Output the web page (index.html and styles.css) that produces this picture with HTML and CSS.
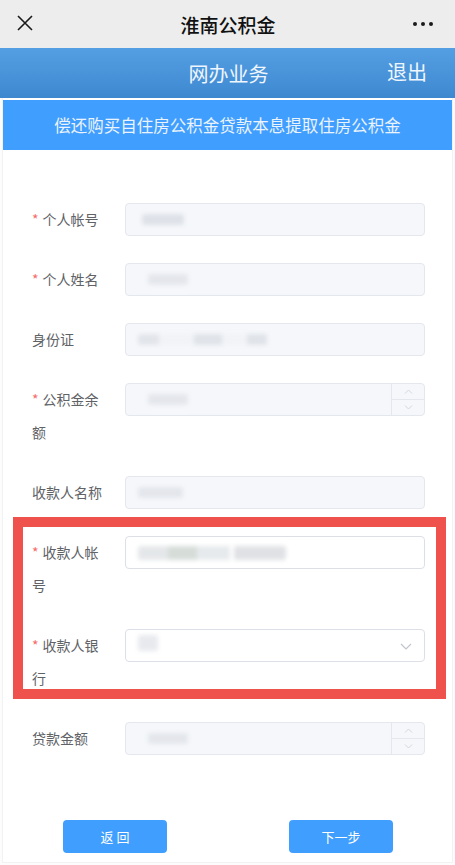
FILE: index.html
```html
<!DOCTYPE html>
<html lang="zh-CN">
<head>
    <meta charset="UTF-8">
    <meta name="viewport" content="width=device-width, initial-scale=1.0">
    <title>淮南公积金</title>
    <link rel="stylesheet" href="styles.css">
</head>
<body>
    <div class="topbar">
        <svg class="close" width="16" height="16" viewBox="0 0 16 16"><path d="M1 1L15 15M15 1L1 15" stroke="#1a1a1a" stroke-width="1.6" fill="none"/></svg>
        <span class="title">淮南公积金</span>
        <span class="dots"><i></i><i></i><i></i></span>
    </div>
    <div class="header">
        <span class="header-title">网办业务</span>
        <a class="logout" href="">退出</a>
    </div>
    <div class="page">
        <div class="subtitle">偿还购买自住房公积金贷款本息提取住房公积金</div>
        <form class="form">
            <div class="row">
                <label class="label"><em>*</em>个人帐号</label>
                <div class="input disabled"><span class="blob b1"></span></div>
            </div>
            <div class="row">
                <label class="label"><em>*</em>个人姓名</label>
                <div class="input disabled"><span class="blob b2"></span></div>
            </div>
            <div class="row">
                <label class="label">身份证</label>
                <div class="input disabled"><span class="blob b3"></span></div>
            </div>
            <div class="row">
                <label class="label"><em>*</em>公积金余额</label>
                <div class="input disabled number">
                    <span class="blob b2"></span>
                    <div class="spin">
                        <span><svg width="9" height="5" viewBox="0 0 9 5"><path d="M1 4.5L4.5 1L8 4.5" stroke="#d3d6dc" fill="none"/></svg></span>
                        <span><svg width="9" height="5" viewBox="0 0 9 5"><path d="M1 0.5L4.5 4L8 0.5" stroke="#d3d6dc" fill="none"/></svg></span>
                    </div>
                </div>
            </div>
            <div class="row">
                <label class="label">收款人名称</label>
                <div class="input disabled"><span class="blob b4"></span></div>
            </div>
            <div class="row">
                <label class="label"><em>*</em>收款人帐号</label>
                <div class="input"><span class="blob b5"></span></div>
            </div>
            <div class="row">
                <label class="label"><em>*</em>收款人银行</label>
                <div class="input select">
                    <span class="blob b6"></span>
                    <svg class="arrow" width="12" height="7" viewBox="0 0 12 7"><path d="M1 1L6 6L11 1" stroke="#c0c4cc" stroke-width="1.2" fill="none"/></svg>
                </div>
            </div>
            <div class="row">
                <label class="label">贷款金额</label>
                <div class="input disabled number">
                    <span class="blob b2"></span>
                    <div class="spin">
                        <span><svg width="9" height="5" viewBox="0 0 9 5"><path d="M1 4.5L4.5 1L8 4.5" stroke="#d3d6dc" fill="none"/></svg></span>
                        <span><svg width="9" height="5" viewBox="0 0 9 5"><path d="M1 0.5L4.5 4L8 0.5" stroke="#d3d6dc" fill="none"/></svg></span>
                    </div>
                </div>
            </div>
        </form>
        <div class="actions">
            <button class="btn">返 回</button>
            <button class="btn">下一步</button>
        </div>
        <div class="mark"></div>
    </div>
</body>
</html>
```

FILE: styles.css
```css
*{
    margin: 0;
    padding: 0;
    box-sizing: border-box;
}
a{
    text-decoration: none;
}
html, body{
    overflow: hidden;
}
body{
    width: 455px;
    height: 865px;
    background: #fcfcfc;
    font-family: "Noto Sans CJK SC", "Noto Sans", sans-serif;
    color: #606266;
    position: relative;
}
.topbar{
    height: 48px;
    background: #ededed;
    display: flex;
    align-items: center;
    justify-content: space-between;
    padding: 0 22px 0 17px;
}
.close{
    display: block;
    margin-top: -2px;
}
.title{
    font-size: 19px;
    font-weight: 500;
    color: #111;
    margin-left: 10px;
}
.dots{
    display: flex;
    gap: 4px;
}
.dots i{
    width: 4px;
    height: 4px;
    border-radius: 50%;
    background: #1a1a1a;
}
.header{
    height: 50px;
    background: linear-gradient(#549fe3, #3e88d0);
    display: flex;
    align-items: center;
    justify-content: center;
    position: relative;
    color: #f0f6fd;
    font-size: 20px;
}
.header-title{
    margin-left: 2px;
}
.logout{
    position: absolute;
    right: 28px;
    top: 9px;
    color: #f0f6fd;
    font-size: 20px;
}
.page{
    margin: 0 2px;
    padding-top: 2px;
    background: #fff;
    border-left: 1px solid #f2f2f2;
    border-right: 1px solid #f2f2f2;
    border-bottom: 1px solid #f2f2f2;
    height: 765px;
}
.subtitle{
    height: 50px;
    line-height: 50px;
    background: #409eff;
    color: #eaf3fe;
    font-size: 16.5px;
    text-align: center;
}
.form{
    padding: 53px 27px 0 29px;
}
.row{
    display: flex;
    align-items: flex-start;
    margin-bottom: 27px;
}
.label{
    width: 93px;
    flex-shrink: 0;
    padding-right: 18px;
    font-size: 14px;
    line-height: 33px;
    color: #606266;
}
.label em{
    font-style: normal;
    color: #f56c6c;
    margin-right: 4px;
}
.input{
    width: 300px;
    height: 33px;
    border: 1px solid #dcdfe6;
    border-radius: 4px;
    background: #fff;
    position: relative;
    display: flex;
    align-items: center;
    padding-left: 12px;
}
.input.disabled{
    background: #f5f7fa;
    border-color: #e4e7ed;
}
.blob{
    display: block;
    height: 11px;
    border-radius: 3px;
    background: #d9dce3;
    filter: blur(2px);
}
.b1{ width: 42px; margin-left: 4px; opacity: 0.8; }
.b2{ width: 40px; margin-left: 10px; opacity: 0.6; }
.b3{ width: 140px; opacity: 0.55; background: linear-gradient(90deg, #d3d6de 0 15%, #eef0f4 15% 40%, #cfd3db 40% 60%, #eef0f4 60% 78%, #cfd3db 78% 92%, transparent 92%); }
.b4{ width: 45px; opacity: 0.6; }
.b5{ width: 148px; height: 14px; opacity: 0.75; background: linear-gradient(90deg, #dcdfe2 0 20%, #c9d2cc 20% 40%, #dfe3e6 40% 62%, #fff 62% 65%, #d6d8dc 65% 100%); }
.b6{ width: 20px; height: 16px; opacity: 0.6; margin-top: -6px; }
.spin{
    position: absolute;
    right: 0;
    top: 0;
    bottom: 0;
    width: 33px;
    border-left: 1px solid #e4e7ed;
    display: flex;
    flex-direction: column;
}
.spin span{
    flex: 1;
    display: flex;
    align-items: center;
    justify-content: center;
}
.spin span + span{
    border-top: 1px solid #e4e7ed;
}
.arrow{
    position: absolute;
    right: 12px;
    top: 13px;
}
.actions{
    display: flex;
    justify-content: center;
    gap: 122px;
    padding-top: 38px;
    padding-left: 1px;
}
.btn{
    width: 104px;
    height: 33px;
    border: none;
    border-radius: 4px;
    background: #409eff;
    color: #fff;
    font-family: "Noto Sans CJK SC", sans-serif;
    font-size: 13px;
}
.mark{
    position: absolute;
    left: 13px;
    top: 517px;
    width: 433px;
    height: 182px;
    border: 10px solid #ef524c;
}
```
